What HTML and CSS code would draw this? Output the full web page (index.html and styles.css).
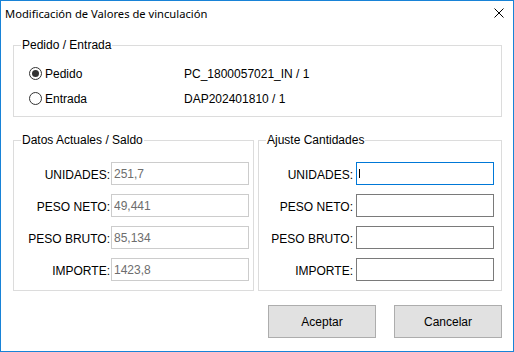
FILE: index.html
```html
<!DOCTYPE html>
<html lang="es">
<head>
    <meta charset="UTF-8">
    <meta name="viewport" content="width=device-width, initial-scale=1.0">
    <title>Modificación de Valores de vinculación</title>
    <link rel="stylesheet" href="styles.css">
</head>
<body>
    <div class="window">
        <div class="titlebar">
            <span class="title">Modificación de Valores de vinculación</span>
            <svg class="close" width="10" height="10" viewBox="0 0 10 10">
                <path d="M0.5 0.5 L9.5 9.5 M9.5 0.5 L0.5 9.5" stroke="#000" stroke-width="1" fill="none"/>
            </svg>
        </div>

        <fieldset class="group group-top">
            <legend>Pedido / Entrada</legend>
            <div class="radio-row">
                <label class="radio"><input type="radio" name="tipo" checked>Pedido</label>
                <span class="ref">PC_1800057021_IN / 1</span>
            </div>
            <div class="radio-row">
                <label class="radio"><input type="radio" name="tipo">Entrada</label>
                <span class="ref">DAP202401810 / 1</span>
            </div>
        </fieldset>

        <div class="groups">
            <fieldset class="group group-left">
                <legend>Datos Actuales / Saldo</legend>
                <div class="fields">
                    <label>UNIDADES:</label>
                    <input type="text" value="251,7" disabled>
                    <label>PESO NETO:</label>
                    <input type="text" value="49,441" disabled>
                    <label>PESO BRUTO:</label>
                    <input type="text" value="85,134" disabled>
                    <label>IMPORTE:</label>
                    <input type="text" value="1423,8" disabled>
                </div>
            </fieldset>
            <fieldset class="group group-right">
                <legend>Ajuste Cantidades</legend>
                <div class="fields">
                    <label>UNIDADES:</label>
                    <div class="focus-box"><input type="text" class="focused"><span class="caret"></span></div>
                    <label>PESO NETO:</label>
                    <input type="text">
                    <label>PESO BRUTO:</label>
                    <input type="text">
                    <label>IMPORTE:</label>
                    <input type="text">
                </div>
            </fieldset>
        </div>

        <div class="buttons">
            <button>Aceptar</button>
            <button>Cancelar</button>
        </div>
    </div>
</body>
</html>
```

FILE: styles.css
```css
body {
    margin: 0;
    padding: 0;
    background-color: #ffffff;
    font-family: "Liberation Sans", Arial, sans-serif;
    font-size: 12px;
    color: #000000;
}

.window {
    width: 514px;
    height: 352px;
    box-sizing: border-box;
    border: 1px solid #1883d7;
    background-color: #ffffff;
}

.titlebar {
    height: 30px;
    display: flex;
    align-items: center;
    justify-content: space-between;
    padding: 0 9px 0 4px;
}

.title {
    font-family: "Noto Sans", "Open Sans", sans-serif;
    font-size: 11.2px;
    margin-top: -6px;
}

.close {
    margin-top: -6px;
}

.group {
    margin: 0;
    padding: 0;
    border: 1px solid #dcdcdc;
    min-width: 0;
}

.group legend {
    padding: 0 1px;
    margin-left: 7px;
    line-height: 14px;
}

.group-top {
    margin: 7px 11px 0 12px;
    padding: 9px 0 5px 0;
}

.radio-row {
    height: 25px;
    display: flex;
    align-items: center;
}

.radio {
    width: 170px;
    display: flex;
    align-items: center;
}

.radio input {
    appearance: none;
    width: 13px;
    height: 13px;
    margin: 0 3px 0 15px;
    border: 1px solid #333333;
    border-radius: 50%;
    box-sizing: border-box;
    background-color: #ffffff;
    display: flex;
    align-items: center;
    justify-content: center;
}

.radio input:checked::after {
    content: "";
    width: 7px;
    height: 7px;
    border-radius: 50%;
    background-color: #333333;
}

.groups {
    display: flex;
    gap: 4px;
    margin: 16px 11px 0 12px;
}

.group-left {
    width: 241px;
    box-sizing: border-box;
}

.group-right {
    width: 244px;
    box-sizing: border-box;
}

.fields {
    display: grid;
    grid-template-columns: 97px 138px;
    row-gap: 9px;
    padding: 15px 0 9px 0;
    align-items: center;
}

.fields label {
    text-align: right;
    padding-right: 1px;
    padding-top: 3px;
}

.group-right .fields label {
    padding-right: 3px;
}

.fields input {
    width: 138px;
    height: 23px;
    box-sizing: border-box;
    margin: 0;
    padding: 0 2px;
    border: 1px solid #7a7a7a;
    background-color: #ffffff;
    font-family: "Liberation Sans", Arial, sans-serif;
    font-size: 12px;
    color: #000000;
    outline: none;
}

.fields input:disabled {
    border-color: #cccccc;
    color: #6d6d6d;
}

.focus-box {
    position: relative;
}

.fields input.focused {
    border-color: #0078d7;
}

.caret {
    position: absolute;
    left: 3px;
    top: 7px;
    width: 1px;
    height: 9px;
    background-color: #000000;
}

.buttons {
    display: flex;
    justify-content: flex-end;
    gap: 18px;
    margin: 14px 11px 0 0;
}

.buttons button {
    width: 108px;
    height: 33px;
    margin: 0;
    padding: 0;
    background-color: #e1e1e1;
    border: 1px solid #adadad;
    font-family: "Liberation Sans", Arial, sans-serif;
    font-size: 12px;
    color: #000000;
}
```
